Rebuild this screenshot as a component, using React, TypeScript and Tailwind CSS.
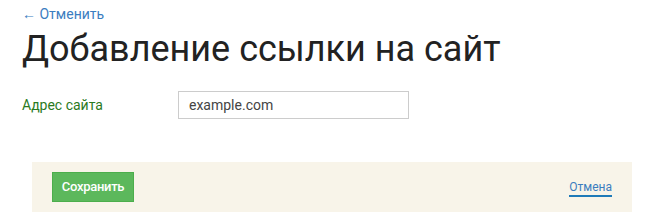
export default function App() {
  return (
    <div className="w-[653px] h-[217px] bg-white overflow-hidden font-['Roboto',sans-serif]">
      <div className="px-[22px] pt-[6px]">
        <a href="#" className="block text-[14px] leading-[17px] text-[#3b7dbf]">
          ← Отменить
        </a>
        <h1 className="mt-[4px] text-[36px] leading-[44px] font-normal text-[#222]">Добавление ссылки на сайт</h1>
        <div className="mt-[20px] flex items-center">
          <label className="w-[156px] text-[14px] text-[#2b7a1e]">Адрес сайта</label>
          <input
            defaultValue="example.com"
            className="w-[231px] h-[28px] border border-[#cccccc] px-[10px] text-[14px] text-[#444] outline-none"
          />
        </div>
      </div>
      <div className="ml-[32px] mr-[21px] mt-[43px] h-[50px] bg-[#f8f4e9] flex items-center justify-between pl-[20px] pr-[20px]">
        <button className="h-[30px] w-[82px] bg-[#5cb85c] border border-[#4cae4c] text-white text-[13px] font-medium tracking-[-0.3px]">
          Сохранить
        </button>
        <a href="#" className="mt-[2px] text-[12px] text-[#3b7dbf] border-b-2 border-[#1f7ab8] leading-[15px]">
          Отмена
        </a>
      </div>
    </div>
  );
}
